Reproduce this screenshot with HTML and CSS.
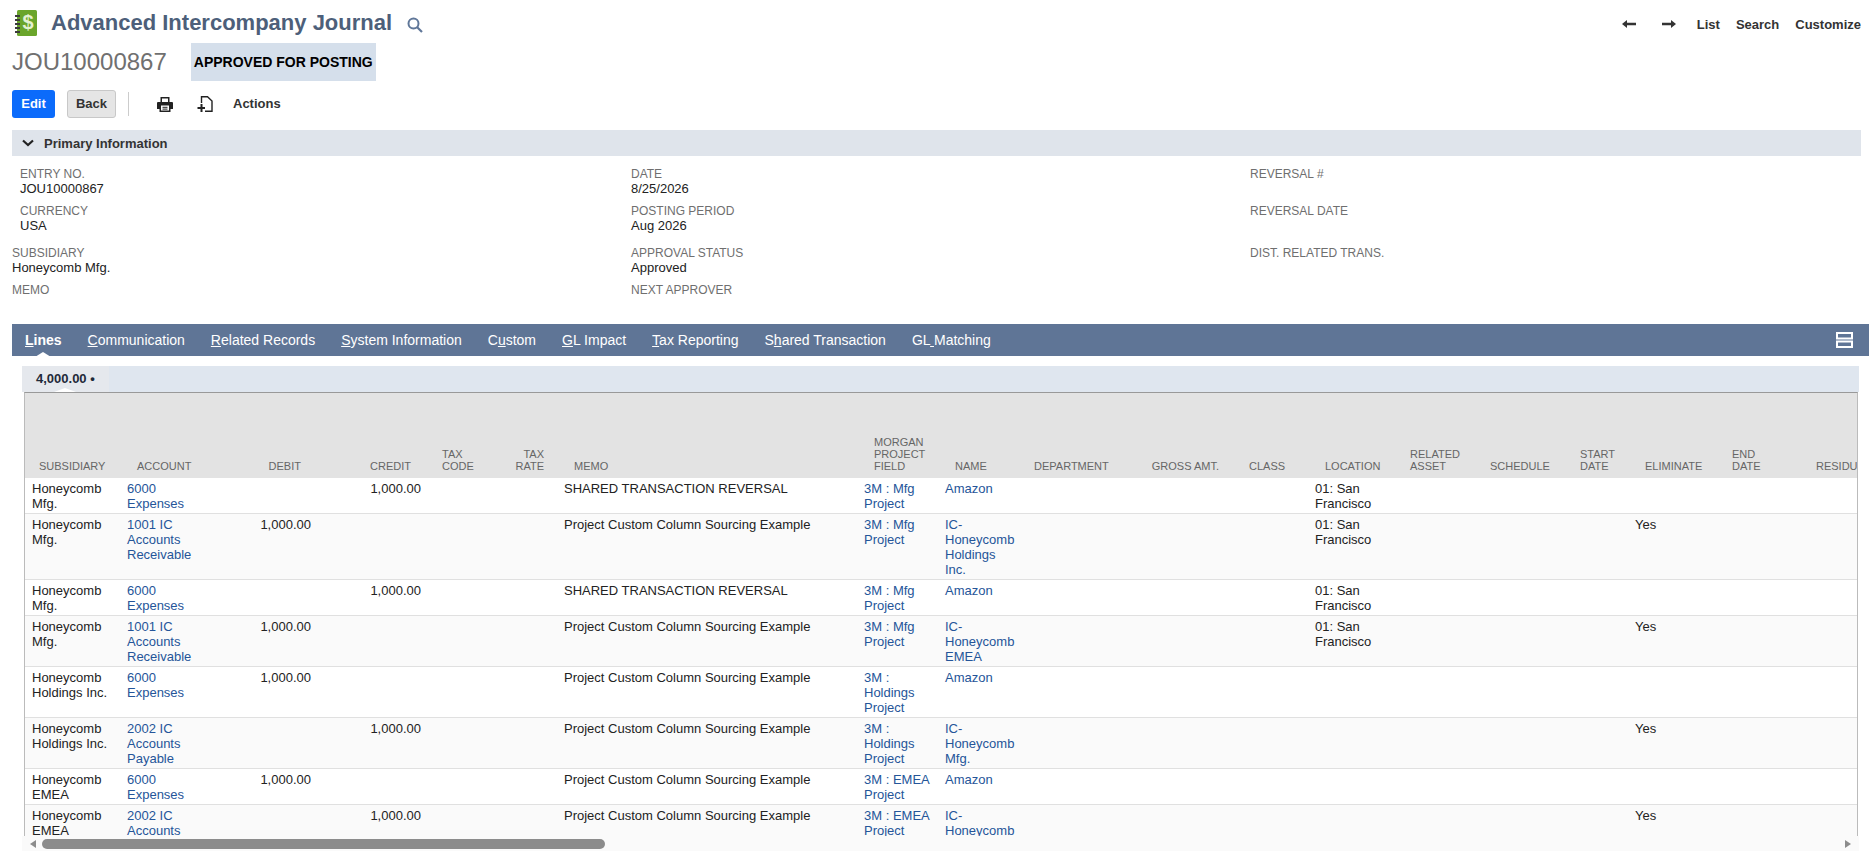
FILE: index.html
```html
<!DOCTYPE html>
<html lang="en">
<head>
  <meta charset="UTF-8">
  <meta name="viewport" content="width=device-width, initial-scale=1.0">
  <title>Advanced Intercompany Journal</title>
  <link rel="stylesheet" href="styles.css">
</head>
<body>
  <div class="title-row">
    <svg class="record-icon" width="22" height="26" viewBox="0 0 22 26">
      <rect x="2" y="0" width="20" height="26" rx="1.5" fill="#6aa52b"/>
      <g fill="#3c3c3c">
        <rect x="0" y="5" width="5" height="2"/>
        <rect x="0" y="9" width="5" height="2"/>
        <rect x="0" y="13" width="5" height="2"/>
        <rect x="0" y="17" width="5" height="2"/>
        <rect x="0" y="21" width="5" height="2"/>
      </g>
      <text x="13" y="19" text-anchor="middle" class="dollar">$</text>
    </svg>
    <h1>Advanced Intercompany Journal</h1>
    <svg class="search-icon" width="16" height="16" viewBox="0 0 16 16">
      <circle cx="6.5" cy="6.5" r="5" fill="none" stroke="#607799" stroke-width="2"/>
      <line x1="10" y1="10" x2="15" y2="15" stroke="#607799" stroke-width="2.2"/>
    </svg>
    <div class="top-nav">
      <svg width="14" height="10" viewBox="0 0 14 10"><path d="M0 5 L5 1 V3.8 H14 V6.2 H5 V9 Z" fill="#333"/></svg>
      <svg class="next" width="14" height="10" viewBox="0 0 14 10"><path d="M14 5 L9 1 V3.8 H0 V6.2 H9 V9 Z" fill="#333"/></svg>
      <a href="#" class="list-link">List</a>
      <a href="#">Search</a>
      <a href="#">Customize</a>
    </div>
  </div>

  <div class="status-row">
    <span class="record-no">JOU10000867</span>
    <span class="status">APPROVED FOR POSTING</span>
  </div>

  <div class="toolbar">
    <button class="btn-edit">Edit</button>
    <button class="btn-back">Back</button>
    <span class="divider"></span>
    <svg class="print-icon" width="16" height="16" viewBox="0 0 16 16">
      <path d="M3.5 6 V1 H12.5 V6 H11 V2.5 H5 V6 Z" fill="#222"/>
      <path d="M1 6 H15 Q16 6 16 7 V13 H13.5 V16 H2.5 V13 H0 V7 Q0 6 1 6 Z M4 9.5 V14.5 H12 V9.5 Z" fill="#222"/>
      <rect x="5.5" y="10.8" width="5" height="1" fill="#222"/>
      <rect x="5.5" y="12.6" width="5" height="1" fill="#222"/>
    </svg>
    <svg class="add-icon" width="16" height="16" viewBox="0 0 16 16">
      <path d="M4.5 7 V0.8 H10.5 L15 5 V15.2 H8" fill="none" stroke="#222" stroke-width="1.4"/>
      <path d="M3.5 8 H5.5 V11 H8 V13 H5.5 V16 H3.5 V13 H0.5 V11 H3.5 Z" fill="#222"/>
    </svg>
    <a href="#" class="actions">Actions</a>
  </div>

  <div class="section-bar">
    <svg width="12" height="8" viewBox="0 0 12 8"><path d="M1 1.5 L6 6 L11 1.5" fill="none" stroke="#222" stroke-width="2.2"/></svg>
    <span>Primary Information</span>
  </div>

  <div class="fields">
    <div class="field indent"><label>ENTRY NO.</label><div>JOU10000867</div></div>
    <div class="field"><label>DATE</label><div>8/25/2026</div></div>
    <div class="field"><label>REVERSAL #</label></div>
    <div class="field indent"><label>CURRENCY</label><div>USA</div></div>
    <div class="field"><label>POSTING PERIOD</label><div>Aug 2026</div></div>
    <div class="field"><label>REVERSAL DATE</label></div>
    <div class="field"><label>SUBSIDIARY</label><div>Honeycomb Mfg.</div></div>
    <div class="field"><label>APPROVAL STATUS</label><div>Approved</div></div>
    <div class="field"><label>DIST. RELATED TRANS.</label></div>
    <div class="field"><label>MEMO</label></div>
    <div class="field"><label>NEXT APPROVER</label></div>
  </div>

  <div class="tabs">
    <a href="#" class="active"><u>L</u>ines</a>
    <a href="#"><u>C</u>ommunication</a>
    <a href="#"><u>R</u>elated Records</a>
    <a href="#"><u>S</u>ystem Information</a>
    <a href="#">C<u>u</u>stom</a>
    <a href="#"><u>G</u>L Impact</a>
    <a href="#"><u>T</u>ax Reporting</a>
    <a href="#">S<u>h</u>ared Transaction</a>
    <a href="#">GL<u> </u>Matching</a>
    <svg class="layout-btn" width="17" height="16" viewBox="0 0 17 16">
      <rect x="1" y="1" width="15" height="5.5" fill="none" stroke="#fff" stroke-width="2"/>
      <rect x="1" y="9.5" width="15" height="5.5" fill="none" stroke="#fff" stroke-width="2"/>
    </svg>
  </div>

  <div class="lines-panel">
    <div class="subtabs"><span class="subtab">4,000.00 &bull;</span></div>
    <div class="table-view">
      <table>
        <colgroup>
          <col class="w95"><col class="w85"><col class="w113"><col class="w110"><col class="w62"><col class="w67">
          <col class="w300"><col class="w81"><col class="w79"><col class="w103"><col class="w112"><col class="w76">
          <col class="w85"><col class="w80"><col class="w90"><col class="w65"><col class="w87"><col class="w84"><col class="w121">
        </colgroup>
        <thead>
          <tr>
            <th class="tight">SUBSIDIARY</th><th>ACCOUNT</th><th class="num">DEBIT</th><th class="num">CREDIT</th>
            <th class="tight">TAX CODE</th><th class="num tight">TAX RATE</th><th>MEMO</th><th>MORGAN PROJECT FIELD</th>
            <th>NAME</th><th>DEPARTMENT</th><th class="num tight">GROSS AMT.</th><th>CLASS</th><th>LOCATION</th>
            <th>RELATED ASSET</th><th>SCHEDULE</th><th>START DATE</th><th>ELIMINATE</th><th>END DATE</th><th>RESIDUAL</th>
          </tr>
        </thead>
        <tbody>
          <tr>
            <td>Honeycomb Mfg.</td><td><a href="#">6000 Expenses</a></td><td></td><td class="num">1,000.00</td><td></td><td></td>
            <td>SHARED TRANSACTION REVERSAL</td><td><a href="#">3M : Mfg Project</a></td><td><a href="#">Amazon</a></td>
            <td></td><td></td><td></td><td>01: San Francisco</td><td></td><td></td><td></td><td></td><td></td><td></td>
          </tr>
          <tr>
            <td>Honeycomb Mfg.</td><td><a href="#">1001 IC Accounts Receivable</a></td><td class="num">1,000.00</td><td></td><td></td><td></td>
            <td>Project Custom Column Sourcing Example</td><td><a href="#">3M : Mfg Project</a></td><td><a href="#">IC-Honeycomb Holdings Inc.</a></td>
            <td></td><td></td><td></td><td>01: San Francisco</td><td></td><td></td><td></td><td>Yes</td><td></td><td></td>
          </tr>
          <tr>
            <td>Honeycomb Mfg.</td><td><a href="#">6000 Expenses</a></td><td></td><td class="num">1,000.00</td><td></td><td></td>
            <td>SHARED TRANSACTION REVERSAL</td><td><a href="#">3M : Mfg Project</a></td><td><a href="#">Amazon</a></td>
            <td></td><td></td><td></td><td>01: San Francisco</td><td></td><td></td><td></td><td></td><td></td><td></td>
          </tr>
          <tr>
            <td>Honeycomb Mfg.</td><td><a href="#">1001 IC Accounts Receivable</a></td><td class="num">1,000.00</td><td></td><td></td><td></td>
            <td>Project Custom Column Sourcing Example</td><td><a href="#">3M : Mfg Project</a></td><td><a href="#">IC-Honeycomb EMEA</a></td>
            <td></td><td></td><td></td><td>01: San Francisco</td><td></td><td></td><td></td><td>Yes</td><td></td><td></td>
          </tr>
          <tr>
            <td>Honeycomb Holdings Inc.</td><td><a href="#">6000 Expenses</a></td><td class="num">1,000.00</td><td></td><td></td><td></td>
            <td>Project Custom Column Sourcing Example</td><td><a href="#">3M : Holdings Project</a></td><td><a href="#">Amazon</a></td>
            <td></td><td></td><td></td><td></td><td></td><td></td><td></td><td></td><td></td><td></td>
          </tr>
          <tr>
            <td>Honeycomb Holdings Inc.</td><td><a href="#">2002 IC Accounts Payable</a></td><td></td><td class="num">1,000.00</td><td></td><td></td>
            <td>Project Custom Column Sourcing Example</td><td><a href="#">3M : Holdings Project</a></td><td><a href="#">IC-Honeycomb Mfg.</a></td>
            <td></td><td></td><td></td><td></td><td></td><td></td><td></td><td>Yes</td><td></td><td></td>
          </tr>
          <tr>
            <td>Honeycomb EMEA</td><td><a href="#">6000 Expenses</a></td><td class="num">1,000.00</td><td></td><td></td><td></td>
            <td>Project Custom Column Sourcing Example</td><td><a href="#">3M : EMEA Project</a></td><td><a href="#">Amazon</a></td>
            <td></td><td></td><td></td><td></td><td></td><td></td><td></td><td></td><td></td><td></td>
          </tr>
          <tr>
            <td>Honeycomb EMEA</td><td><a href="#">2002 IC Accounts Payable</a></td><td></td><td class="num">1,000.00</td><td></td><td></td>
            <td>Project Custom Column Sourcing Example</td><td><a href="#">3M : EMEA Project</a></td><td><a href="#">IC-Honeycomb Holdings Inc.</a></td>
            <td></td><td></td><td></td><td></td><td></td><td></td><td></td><td>Yes</td><td></td><td></td>
          </tr>
        </tbody>
      </table>
    </div>
    <div class="scrollbar">
      <span class="arrow-left"></span>
      <span class="thumb"></span>
      <span class="arrow-right"></span>
    </div>
  </div>
</body>
</html>
```

FILE: styles.css
```css
body {
  font-family: "Liberation Sans", Arial, sans-serif;
  font-size: 13px;
  color: #222;
  background-color: #fff;
  margin: 0;
  height: 851px;
  overflow: hidden;
}

a {
  color: inherit;
  text-decoration: none;
}

.title-row {
  display: flex;
  align-items: center;
  height: 26px;
  padding: 10px 13px 7px 15px;
}

.title-row h1 {
  margin: 0 0 0 14px;
  font-size: 22px;
  font-weight: bold;
  color: #4d5f7a;
}

.search-icon {
  margin: 4px 0 0 15px;
}

.dollar {
  font-family: "Liberation Sans", Arial, sans-serif;
  font-size: 20px;
  font-weight: bold;
  fill: #e4f1d2;
}

.top-nav {
  display: flex;
  align-items: center;
  margin: 2px 0 0 auto;
  font-weight: bold;
  font-size: 13px;
  color: #333;
  gap: 16px;
}

.top-nav .next {
  margin-left: 10px;
}

.top-nav .list-link {
  margin-left: 5px;
}

.status-row {
  display: flex;
  align-items: center;
  height: 38px;
  padding-left: 12px;
}

.record-no {
  font-size: 24px;
  color: #707070;
}

.status {
  display: block;
  margin-left: 24px;
  padding: 0 3px;
  width: 179px;
  line-height: 38px;
  font-size: 14px;
  font-weight: bold;
  color: #000;
  background-color: #d5dfeb;
  white-space: nowrap;
}

.toolbar {
  display: flex;
  align-items: center;
  height: 28px;
  margin-top: 9px;
  padding-left: 12px;
}

.toolbar button {
  height: 28px;
  padding: 0 0 2px;
  border-radius: 3px;
  font-family: inherit;
  font-size: 13px;
  font-weight: bold;
}

.btn-edit {
  width: 43px;
  border: none;
  background-color: #0b6bfb;
  color: #fff;
}

.btn-back {
  width: 49px;
  margin-left: 12px;
  border: 1px solid #c8c8c8;
  background-color: #e5e5e5;
  color: #333;
}

.divider {
  width: 1px;
  height: 24px;
  margin-left: 12px;
  background-color: #ccc;
}

.print-icon {
  margin-left: 28px;
}

.add-icon {
  margin-left: 24px;
}

.actions {
  margin: 0 0 2px 20px;
  font-weight: bold;
  color: #333;
}

.section-bar {
  display: flex;
  align-items: center;
  height: 26px;
  margin: 12px 13px 0 12px;
  padding-left: 10px;
  background-color: #dfe4eb;
  font-weight: bold;
  color: #333;
}

.section-bar span {
  margin-left: 10px;
}

.fields {
  display: grid;
  grid-template-columns: 619px 619px 1fr;
  grid-template-rows: 37px 42px 37px 16px;
  padding: 11px 0 0 12px;
  height: 132px;
}

.field {
  line-height: 15px;
}

.field label {
  display: block;
  line-height: 14px;
  font-size: 12px;
  color: #6f6f6f;
}

.field.indent {
  padding-left: 8px;
}

.tabs {
  display: flex;
  align-items: center;
  gap: 26px;
  height: 32px;
  margin: 25px 5px 0 12px;
  padding-left: 13px;
  background-color: #5f7596;
  color: #fff;
  font-size: 14px;
}

.tabs a {
  position: relative;
  white-space: pre;
}

.tabs .active {
  font-weight: bold;
}

.tabs .active::after {
  content: "";
  position: absolute;
  left: 10px;
  bottom: -9px;
  border-left: 8px solid transparent;
  border-right: 8px solid transparent;
  border-bottom: 5px solid #fff;
}

.layout-btn {
  margin-left: auto;
  margin-right: 16px;
}

.lines-panel {
  margin: 10px 15px 0 22px;
}

.subtabs {
  height: 26px;
  background-color: #dfe6ef;
}

.subtab {
  position: relative;
  display: inline-block;
  width: 87px;
  height: 26px;
  box-sizing: border-box;
  padding-left: 14px;
  line-height: 26px;
  background-color: #e5e8ed;
  font-weight: bold;
  color: #1f2a3a;
}

.subtab::after {
  content: "";
  position: absolute;
  left: 32px;
  bottom: 0;
  border-left: 11px solid transparent;
  border-right: 11px solid transparent;
  border-bottom: 4px solid #fff;
}

.table-view {
  height: 443px;
  margin: 0 1px 0 2px;
  overflow: hidden;
  border-top: 1px solid #999;
  border-left: 1px solid #bbb;
  border-right: 1px solid #bbb;
}

table {
  width: 1895px;
  table-layout: fixed;
  border-collapse: separate;
  border-spacing: 0;
}

.w62 { width: 62px; }
.w65 { width: 65px; }
.w67 { width: 67px; }
.w76 { width: 76px; }
.w79 { width: 79px; }
.w80 { width: 80px; }
.w81 { width: 81px; }
.w84 { width: 84px; }
.w85 { width: 85px; }
.w87 { width: 87px; }
.w90 { width: 90px; }
.w95 { width: 95px; }
.w103 { width: 103px; }
.w110 { width: 110px; }
.w112 { width: 112px; }
.w113 { width: 113px; }
.w121 { width: 121px; }
.w300 { width: 300px; }

thead tr {
  height: 85px;
}

th {
  padding: 0 17px 6px 17px;
  vertical-align: bottom;
  text-align: left;
  font-size: 11px;
  font-weight: normal;
  line-height: 12px;
  color: #666;
  background-color: #e3e3e3;
  white-space: normal;
}

th.num {
  text-align: right;
}

th.tight {
  padding-left: 14px;
  padding-right: 13px;
}

td {
  padding: 3px 7px 2px 7px;
  vertical-align: top;
  line-height: 15px;
  border-bottom: 1px solid #e0e0e0;
}

td.num {
  text-align: right;
}

tbody tr:nth-child(even) td {
  background-color: #fafafa;
}

td a {
  color: #255599;
}

.scrollbar {
  display: flex;
  align-items: center;
  height: 15px;
  background-color: #fafafa;
}

.thumb {
  width: 563px;
  height: 10px;
  margin-left: 6px;
  border-radius: 5px;
  background-color: #8c8c8c;
}

.arrow-left {
  margin-left: 8px;
  border-top: 4px solid transparent;
  border-bottom: 4px solid transparent;
  border-right: 6px solid #8c8c8c;
}

.arrow-right {
  margin-left: auto;
  margin-right: 8px;
  border-top: 4px solid transparent;
  border-bottom: 4px solid transparent;
  border-left: 6px solid #8c8c8c;
}
```
